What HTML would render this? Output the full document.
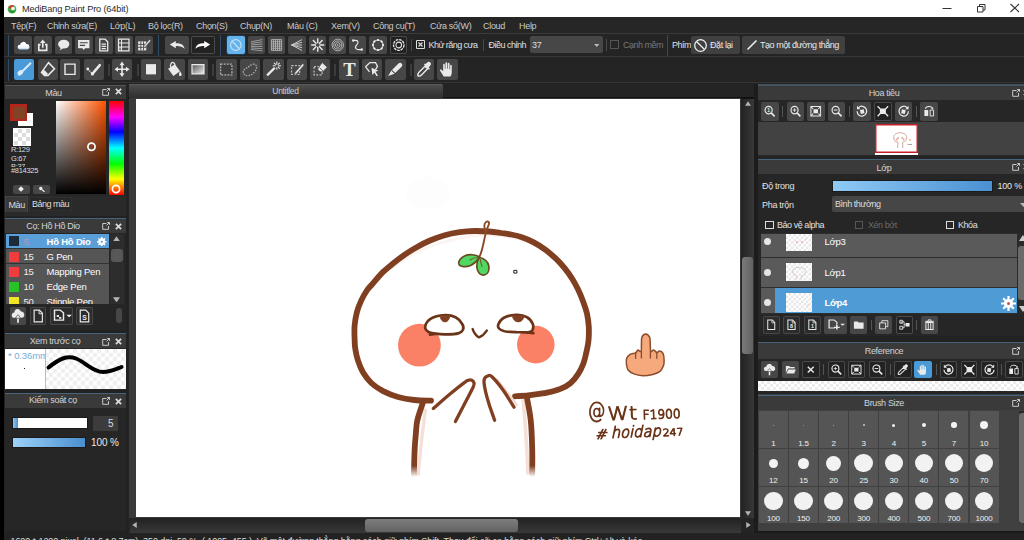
<!DOCTYPE html>
<html><head><meta charset="utf-8"><title>MediBang Paint Pro</title>
<style>
*{box-sizing:border-box;margin:0;padding:0}
html,body{width:1024px;height:540px;overflow:hidden;background:#222}
body{position:relative;font-family:"Liberation Sans","DejaVu Sans",sans-serif;font-size:9px;color:#d8d8d8}
.a{position:absolute}
.b{position:absolute;background:#474747;border-radius:2px}
.b.on{background:#4a9ad8}
.b.on2{background:#66b2ea;box-shadow:0 0 0 1px #1d3a55}
.b.dk{background:#222;box-shadow:inset 0 0 0 1px #4a4a4a}
.b.dk2{background:#2c2c2c;box-shadow:inset 0 0 0 1px #474747}
.b svg{position:absolute;left:0;top:0;width:100%;height:100%}
.sep{position:absolute;width:1px}
.chk{background-color:#fff;background-image:linear-gradient(45deg,#ddd 25%,transparent 25%,transparent 75%,#ddd 75%),linear-gradient(45deg,#ddd 25%,transparent 25%,transparent 75%,#ddd 75%);background-size:6px 6px;background-position:0 0,3px 3px}
</style></head><body>
<div class="a" style="left:0px;top:0px;width:4px;height:540px;background:#000;"></div>
<div class="a" style="left:4px;top:0px;width:1020px;height:17px;background:#fff;"></div>
<svg class="a" style="left:7px;top:4px" width="10" height="10" viewBox="0 0 10 10"><circle cx="5" cy="5.200" r="4.300" fill="#3fae49"/><path d="M5 1a4.300 4.300 0 0 0-3.800 2.500l3 1.500 3-3A4 4 0 0 0 5 1z" fill="#e23b2e"/><circle cx="6" cy="4.500" r="1.800" fill="#fff"/><path d="M3 6.500a3 3 0 0 0 4.500 1" stroke="#1d6e2a" stroke-width="1" fill="none"/></svg>
<div class="a" style="left:22px;top:4.5px;font-size:9.2px;color:#2a2a2a;letter-spacing:-0.15px;white-space:nowrap;line-height:1;">MediBang Paint Pro (64bit)</div>
<svg class="a" style="left:930px;top:0" width="94" height="17" viewBox="0 0 94 17"><path d="M12.500 8.500h9" stroke="#333" stroke-width="1"/><path d="M47.500 6.500h5.500v5.500h-5.500z" fill="none" stroke="#333"/><path d="M49.500 6.500v-2h5.500v5.500h-2" fill="none" stroke="#333"/><path d="M80.500 4l8.500 8M89 4l-8.500 8" stroke="#333" stroke-width="1.100"/></svg>
<div class="a" style="left:4px;top:17px;width:1020px;height:16px;background:#262626;"></div>
<div class="a" style="left:11px;top:21.8px;font-size:9px;color:#cacaca;letter-spacing:-0.3px;white-space:nowrap;line-height:1;">Tệp(F)</div>
<div class="a" style="left:47px;top:21.8px;font-size:9px;color:#cacaca;letter-spacing:-0.3px;white-space:nowrap;line-height:1;">Chỉnh sửa(E)</div>
<div class="a" style="left:110px;top:21.8px;font-size:9px;color:#cacaca;letter-spacing:-0.3px;white-space:nowrap;line-height:1;">Lớp(L)</div>
<div class="a" style="left:148px;top:21.8px;font-size:9px;color:#cacaca;letter-spacing:-0.3px;white-space:nowrap;line-height:1;">Bộ lọc(R)</div>
<div class="a" style="left:196px;top:21.8px;font-size:9px;color:#cacaca;letter-spacing:-0.3px;white-space:nowrap;line-height:1;">Chọn(S)</div>
<div class="a" style="left:240px;top:21.8px;font-size:9px;color:#cacaca;letter-spacing:-0.3px;white-space:nowrap;line-height:1;">Chụp(N)</div>
<div class="a" style="left:287px;top:21.8px;font-size:9px;color:#cacaca;letter-spacing:-0.3px;white-space:nowrap;line-height:1;">Màu (C)</div>
<div class="a" style="left:331px;top:21.8px;font-size:9px;color:#cacaca;letter-spacing:-0.3px;white-space:nowrap;line-height:1;">Xem(V)</div>
<div class="a" style="left:373px;top:21.8px;font-size:9px;color:#cacaca;letter-spacing:-0.3px;white-space:nowrap;line-height:1;">Công cụ(T)</div>
<div class="a" style="left:430px;top:21.8px;font-size:9px;color:#cacaca;letter-spacing:-0.3px;white-space:nowrap;line-height:1;">Cửa sổ(W)</div>
<div class="a" style="left:483px;top:21.8px;font-size:9px;color:#cacaca;letter-spacing:-0.3px;white-space:nowrap;line-height:1;">Cloud</div>
<div class="a" style="left:519px;top:21.8px;font-size:9px;color:#cacaca;letter-spacing:-0.3px;white-space:nowrap;line-height:1;">Help</div>
<div class="a" style="left:4px;top:33px;width:1020px;height:23px;background:#242424;border-top:1px solid #3a3a3a"></div>
<div class="a" style="left:4px;top:56px;width:1020px;height:28px;background:#242424;border-top:1.500px solid #383838"></div>
<div class="a" style="left:4px;top:82px;width:1020px;height:1px;background:#343434;"></div>
<div class="sep" style="left:8px;top:35px;height:21px;width:1px;background:#2f4c6a"></div>
<div class="sep" style="left:8px;top:59px;height:22px;width:1px;background:#2f4c6a"></div>
<div class="b " style="left:13.5px;top:36px;width:18px;height:18px"><svg viewBox="0 0 20 20" preserveAspectRatio="none"><defs><linearGradient id="cg" x1="0" y1="0" x2="0" y2="1"><stop offset="0" stop-color="#fff"/><stop offset=".7" stop-color="#f4f9ff"/><stop offset="1" stop-color="#a9cdee"/></linearGradient></defs><path d="M6.500 15a2.600 2.600 0 0 1 .2-5.200A3.600 3.600 0 0 1 13.700 9 2.900 2.900 0 0 1 14.500 15z" fill="url(#cg)"/></svg></div>
<div class="b " style="left:34px;top:36px;width:17.5px;height:18px"><svg viewBox="0 0 20 20" preserveAspectRatio="none"><path d="M7.500 9.500H5.500v6.500h9V9.500h-2" fill="none" stroke="#eaeaea" stroke-width="1.900"/><path d="M10 13V6" stroke="#eaeaea" stroke-width="1.900"/><path d="M6.800 7.800 10 3.800l3.200 4z" fill="#eaeaea"/></svg></div>
<div class="b " style="left:54.5px;top:36px;width:17.5px;height:18px"><svg viewBox="0 0 20 20" preserveAspectRatio="none"><ellipse cx="10" cy="9" rx="6.5" ry="4.8" fill="#eaeaea"/><path d="M7 12l-1.500 4 4.500-3z" fill="#eaeaea"/></svg></div>
<div class="b " style="left:75px;top:36px;width:17.5px;height:18px"><svg viewBox="0 0 20 20" preserveAspectRatio="none"><path d="M3.500 4.500h13v9h-5l-1.500 2-1.500-2h-5z" fill="#eaeaea"/><path d="M5.500 7.500h9M5.500 10.500h6" stroke="#444" stroke-width="1.300"/></svg></div>
<div class="b " style="left:95px;top:36px;width:17.5px;height:18px"><svg viewBox="0 0 20 20" preserveAspectRatio="none"><path d="M5.500 3.500h6l3 3v10h-9z" fill="none" stroke="#eaeaea" stroke-width="1.500"/><path d="M7.500 9h5M7.500 11.500h5M7.500 14h5" stroke="#eaeaea" stroke-width="1.200"/></svg></div>
<div class="b " style="left:115px;top:36px;width:17.5px;height:18px"><svg viewBox="0 0 20 20" preserveAspectRatio="none"><path d="M4 3.500h12v13H4z" fill="none" stroke="#eaeaea" stroke-width="1.400"/><path d="M4 7.800h12M4 12.200h12M7.500 3.500v13" stroke="#eaeaea" stroke-width="1.200"/><circle cx="5.800" cy="14.500" r="1.600" fill="#444" stroke="#eaeaea"/></svg></div>
<div class="b " style="left:135px;top:36px;width:18px;height:18px"><svg viewBox="0 0 20 20" preserveAspectRatio="none"><path d="M3.500 6h9v10h-9z" fill="#eaeaea"/><path d="M3.500 9.300h9M3.500 12.600h9M6.500 6v10M9.500 6v10" stroke="#444" stroke-width="1"/><path d="M10 11l6-7 1.500 1.200-6 7-2 .8z" fill="#eaeaea" stroke="#444" stroke-width=".6"/></svg></div>
<div class="sep" style="left:158px;top:35px;height:21px;width:1px;background:#2f4c6a"></div>
<div class="b " style="left:165px;top:36px;width:24px;height:18px"><svg viewBox="0 0 20 20" preserveAspectRatio="none"><path d="M4 9.500 9 5.500v2.500c4.500 0 7 1.800 7.300 6.500-1.300-2.500-3.300-3.500-7.300-3.500v2.500z" fill="#eaeaea"/></svg></div>
<div class="b dk" style="left:191px;top:36px;width:24px;height:18px"><svg viewBox="0 0 20 20" preserveAspectRatio="none"><path d="M16 9.500 11 5.500v2.500c-4.500 0-7 1.800-7.300 6.500 1.300-2.500 3.300-3.500 7.300-3.500v2.500z" fill="#fff"/></svg></div>
<div class="sep" style="left:220px;top:35px;height:21px;width:1px;background:#2f4c6a"></div>
<div class="b on2" style="left:227px;top:36px;width:17.5px;height:18px"><svg viewBox="0 0 20 20" preserveAspectRatio="none"><circle cx="10" cy="10" r="6" fill="none" stroke="#bfe1f8" stroke-width="1.300"/><path d="M5.800 5.800l8.400 8.400" stroke="#bfe1f8" stroke-width="1.300"/></svg></div>
<div class="b " style="left:247.5px;top:36px;width:17.5px;height:18px"><svg viewBox="0 0 20 20" preserveAspectRatio="none"><path d="M3.500 6.500l13-2.500M3.500 8.200l13-1.700M3.500 9.900l13-.9M3.500 11.600l13-.1M3.500 13.300l13 .7M3.500 15l13 1.500" stroke="#b4b4b4" stroke-width=".9"/></svg></div>
<div class="b " style="left:268px;top:36px;width:17px;height:18px"><svg viewBox="0 0 20 20" preserveAspectRatio="none"><path d="M4 4h12v12H4z" fill="none" stroke="#bbb"/><path d="M6.400 4v12M8.800 4v12M11.200 4v12M13.600 4v12M4 6.400h12M4 8.800h12M4 11.200h12M4 13.600h12" stroke="#bbb" stroke-width=".9"/></svg></div>
<div class="b " style="left:288px;top:36px;width:17.5px;height:18px"><svg viewBox="0 0 20 20" preserveAspectRatio="none"><path d="M4 10 16 4M4 10l12-3M4 10h12M4 10l12 3M4 10l12 6" stroke="#ccc" stroke-width="1.100"/></svg></div>
<div class="b " style="left:308.5px;top:36px;width:17.5px;height:18px"><svg viewBox="0 0 20 20" preserveAspectRatio="none"><path d="M10 2.500v5.500M10 12v5.500M2.500 10h5.500M12 10h5.500M4.500 4.500l4 4M11.500 11.500l4 4M15.500 4.500l-4 4M8.500 11.500l-4 4" stroke="#eaeaea" stroke-width="1.600"/></svg></div>
<div class="b " style="left:328.5px;top:36px;width:17.5px;height:18px"><svg viewBox="0 0 20 20" preserveAspectRatio="none"><circle cx="10" cy="10" r="6.500" fill="none" stroke="#ccc" stroke-width=".9"/><circle cx="10" cy="10" r="4.500" fill="none" stroke="#ccc" stroke-width=".9"/><circle cx="10" cy="10" r="2.600" fill="none" stroke="#ccc" stroke-width=".9"/><circle cx="10" cy="10" r=".9" fill="#ccc"/></svg></div>
<div class="b " style="left:349px;top:36px;width:17px;height:18px"><svg viewBox="0 0 20 20" preserveAspectRatio="none"><path d="M5 5c6-1 7 2 4 5s-1 6 6 5" fill="none" stroke="#eaeaea" stroke-width="1.300"/><circle cx="5" cy="5" r="1.400" fill="#eaeaea"/><circle cx="15" cy="15" r="1.400" fill="#eaeaea"/></svg></div>
<div class="b " style="left:369px;top:36px;width:18px;height:18px"><svg viewBox="0 0 20 20" preserveAspectRatio="none"><circle cx="10" cy="10" r="5.600" fill="none" stroke="#ddd" stroke-width="1.200"/><g fill="#fff"><circle cx="10" cy="4.400" r="1.100"/><circle cx="10" cy="15.600" r="1.100"/><circle cx="4.400" cy="10" r="1.100"/><circle cx="15.600" cy="10" r="1.100"/><circle cx="6" cy="6" r="1.100"/><circle cx="14" cy="6" r="1.100"/><circle cx="6" cy="14" r="1.100"/><circle cx="14" cy="14" r="1.100"/></g></svg></div>
<div class="b dk" style="left:389.5px;top:36px;width:17.5px;height:18px"><svg viewBox="0 0 20 20" preserveAspectRatio="none"><circle cx="10" cy="10" r="6" fill="none" stroke="#eaeaea" stroke-width="1.500" stroke-dasharray="3 1"/><circle cx="10" cy="10" r="3.200" fill="none" stroke="#eaeaea" stroke-width="1.200"/></svg></div>
<div class="sep" style="left:411px;top:39px;height:12px;width:1px;background:#484848"></div>
<svg class="a" style="left:416px;top:40px" width="9" height="9" viewBox="0 0 9 9"><path d="M.5.500h8v8h-8z" fill="#222" stroke="#ddd"/><path d="M2.500 2.500l4 4M6.500 2.500l-4 4" stroke="#ddd" stroke-width="1.200"/></svg>
<div class="a" style="left:428.5px;top:41px;font-size:9px;color:#e0e0e0;letter-spacing:-0.55px;white-space:nowrap;line-height:1;">Khử răng cưa</div>
<div class="sep" style="left:483px;top:39px;height:12px;width:1px;background:#484848"></div>
<div class="a" style="left:488.5px;top:41px;font-size:9px;color:#e0e0e0;letter-spacing:-0.5px;white-space:nowrap;line-height:1;">Điều chỉnh</div>
<div class="a" style="left:530px;top:36px;width:73px;height:16.5px;background:#474747;border-radius:2px"></div>
<div class="a" style="left:532px;top:41px;font-size:9px;color:#ddd;letter-spacing:-0.3px;white-space:nowrap;line-height:1;">37</div>
<svg class="a" style="left:594px;top:43.500px" width="5.500" height="3" viewBox="0 0 7 4"><path d="M0 0h7L3.500 4z" fill="#bbb"/></svg>
<div class="sep" style="left:606px;top:39px;height:12px;width:1px;background:#484848"></div>
<div class="a" style="left:610px;top:40px;width:9px;height:9px;background:#262626;border:1px solid #555"></div>
<div class="a" style="left:623px;top:41px;font-size:9px;color:#777;letter-spacing:-0.5px;white-space:nowrap;line-height:1;">Cạnh mềm</div>
<div class="sep" style="left:667px;top:35px;height:21px;width:1px;background:#2f4c6a"></div>
<div class="a" style="left:672px;top:41px;font-size:9px;color:#e0e0e0;letter-spacing:-0.5px;white-space:nowrap;line-height:1;">Phím</div>
<div class="a" style="left:690.5px;top:36px;width:49px;height:17.5px;background:#404040;border-radius:2px"></div>
<svg class="a" style="left:693px;top:37.500px" width="15" height="15" viewBox="0 0 15 15"><circle cx="7.500" cy="7.500" r="5.800" fill="none" stroke="#eee" stroke-width="1.300"/><path d="M3.500 3.500l8 8" stroke="#eee" stroke-width="1.300"/></svg>
<div class="a" style="left:710px;top:41px;font-size:9px;color:#e8e8e8;letter-spacing:-0.4px;white-space:nowrap;line-height:1;">Đặt lại</div>
<div class="a" style="left:742px;top:36px;width:102.5px;height:17.5px;background:#404040;border-radius:2px"></div>
<svg class="a" style="left:746px;top:39px" width="12" height="12" viewBox="0 0 12 12"><path d="M1.500 10.500l9-9" stroke="#eee" stroke-width="1.600"/></svg>
<div class="a" style="left:760px;top:41px;font-size:9px;color:#e8e8e8;letter-spacing:-0.45px;white-space:nowrap;line-height:1;">Tạo một đường thẳng</div>
<div class="b on" style="left:13.75px;top:59px;width:20.25px;height:20.5px"><svg viewBox="0 0 20 20" preserveAspectRatio="none"><path d="M16.300 4.200 8.800 11.500" stroke="#dcedfa" stroke-width="1.900" stroke-linecap="round"/><ellipse cx="6.300" cy="13.300" rx="3" ry="2.200" transform="rotate(-35 6.300 13.300)" fill="#dcedfa"/><path d="M3.500 16c1-.3 1.500-1 1.800-2l2 1.200c-1 1-2.300 1.200-3.800.8z" fill="#dcedfa"/></svg></div>
<div class="b " style="left:37.5px;top:59px;width:20px;height:20.5px"><svg viewBox="0 0 20 20" preserveAspectRatio="none"><path d="M10.500 3.500 16.500 9.500 10 16H6.500L3.500 13z" fill="none" stroke="#eaeaea" stroke-width="1.500"/><path d="M6 10.500 10 14.500 8.500 16H6.500L3.500 13z" fill="#eaeaea"/></svg></div>
<div class="b " style="left:60px;top:59px;width:20px;height:20.5px"><svg viewBox="0 0 20 20" preserveAspectRatio="none"><path d="M5 5h10v10H5z" fill="none" stroke="#eaeaea" stroke-width="1.400"/></svg></div>
<div class="b " style="left:83.75px;top:59px;width:20px;height:20.5px"><svg viewBox="0 0 20 20" preserveAspectRatio="none"><path d="M3.800 9.800 8.400 14.500" fill="none" stroke="#eaeaea" stroke-width="1.300" stroke-dasharray="1.200 1"/><path d="M9 13.800 15.800 6" stroke="#eaeaea" stroke-width="2.500" stroke-linecap="round"/><circle cx="3.800" cy="9.800" r="1.400" fill="#eaeaea"/><circle cx="8.400" cy="14.600" r="1.600" fill="#eaeaea"/></svg></div>
<div class="sep" style="left:107.5px;top:63.5px;height:12.5px;width:2px;background:#3c3c3c"></div>
<div class="b " style="left:112px;top:59px;width:20px;height:20.5px"><svg viewBox="0 0 20 20" preserveAspectRatio="none"><path d="M10 2.500 12.500 6h-1.700v3.200H14V7.500L17.500 10 14 12.500v-1.700h-3.200V14h1.700L10 17.500 7.500 14h1.700v-3.200H6v1.700L2.500 10 6 7.500v1.700h3.200V6H7.500z" fill="#eaeaea"/></svg></div>
<div class="sep" style="left:136.5px;top:63.5px;height:12.5px;width:2px;background:#3c3c3c"></div>
<div class="b " style="left:141px;top:59px;width:20px;height:20.5px"><svg viewBox="0 0 20 20" preserveAspectRatio="none"><path d="M5 5h10v10H5z" fill="#eaeaea"/></svg></div>
<div class="b " style="left:164.25px;top:59px;width:20.75px;height:20.5px"><svg viewBox="0 0 20 20" preserveAspectRatio="none"><path d="M4 9.500 10.500 5l5 7-6.500 4.500z" fill="#eaeaea"/><path d="M6.500 8c-1-3 1-5 2.500-4.500S10.500 6 10.500 6" fill="none" stroke="#eaeaea" stroke-width="1.200"/><path d="M15.500 12c1 1.500 1.500 2.500 1.500 3.300a1.300 1.300 0 0 1-2.600 0c0-.8.400-1.800 1.100-3.300z" fill="#eaeaea"/></svg></div>
<div class="b " style="left:188px;top:59px;width:20px;height:20.5px"><svg viewBox="0 0 20 20" preserveAspectRatio="none"><defs><linearGradient id="gr1" x1="0" y1="0" x2="1" y2="1"><stop offset="0" stop-color="#555"/><stop offset="1" stop-color="#eee"/></linearGradient></defs><path d="M4 5.500h12v9H4z" fill="url(#gr1)" stroke="#eaeaea" stroke-width="1.200"/></svg></div>
<div class="sep" style="left:211.5px;top:63.5px;height:12.5px;width:2px;background:#3c3c3c"></div>
<div class="b " style="left:216.25px;top:59px;width:20.5px;height:20.5px"><svg viewBox="0 0 20 20" preserveAspectRatio="none"><path d="M4.500 5h11v10.500h-11z" fill="#3e3e3e" stroke="#b4b4b4" stroke-width="1.300" stroke-dasharray="1.800 1.200"/></svg></div>
<div class="b " style="left:240px;top:59px;width:20px;height:20.5px"><svg viewBox="0 0 20 20" preserveAspectRatio="none"><path d="M3.500 13.500c-.8-2 .8-3.800 3.500-4.800 2.200-.8 3.200-3.500 6.500-3.700 2.800-.1 4 2.500 2.500 5.500s-4.500 5.500-8 5.700c-2.500.1-4-1-4.500-2.700z" fill="none" stroke="#a8a8a8" stroke-width="1.300" stroke-dasharray="1.600 1.100"/></svg></div>
<div class="b " style="left:263px;top:59px;width:20.5px;height:20.5px"><svg viewBox="0 0 20 20" preserveAspectRatio="none"><path d="M4 16 11.500 8.500" stroke="#eaeaea" stroke-width="2.200"/><path d="M13.500 2.500v3M13.500 8v2.500M9.500 6.500h2.800M14.800 6.500h2.700M10.700 3.700l1.800 1.800M14.500 7.500l1.800 1.800M16.300 3.700l-1.800 1.800" stroke="#eaeaea" stroke-width="1"/></svg></div>
<div class="b " style="left:286.5px;top:59px;width:20.25px;height:20.5px"><svg viewBox="0 0 20 20" preserveAspectRatio="none"><path d="M4.500 6.500h8v8.500h-8z" fill="none" stroke="#bbb" stroke-width="1.200" stroke-dasharray="2 1.300"/><path d="M8 13l7.500-8.500 1.500 1.300L9.500 14.300l-2.200.8z" fill="#eaeaea" stroke="#444" stroke-width=".5"/></svg></div>
<div class="b " style="left:309.75px;top:59px;width:20.25px;height:20.5px"><svg viewBox="0 0 20 20" preserveAspectRatio="none"><path d="M4 7.500h8v8h-8z" fill="none" stroke="#bbb" stroke-width="1.200" stroke-dasharray="2 1.300"/><path d="M12 3.500 17 8l-4.500 4.500h-2.500L7.500 10z" fill="#eaeaea" stroke="#444" stroke-width=".6"/><path d="M9.500 8.500l3.500 3.500" stroke="#444" stroke-width=".8"/></svg></div>
<div class="sep" style="left:333.5px;top:63.5px;height:12.5px;width:2px;background:#3c3c3c"></div>
<div class="b " style="left:338.5px;top:59px;width:20.75px;height:20.5px"><svg viewBox="0 0 20 20" preserveAspectRatio="none"><text x="10" y="16.300" font-family="Liberation Serif,DejaVu Serif,serif" font-weight="bold" font-size="18" text-anchor="middle" fill="#eaeaea">T</text></svg></div>
<div class="b " style="left:361.75px;top:59px;width:20px;height:20.5px"><svg viewBox="0 0 20 20" preserveAspectRatio="none"><path d="M3.500 7.500 8 3.500h5.500l2 3.500-2 3.500" fill="none" stroke="#eaeaea" stroke-width="1.300"/><path d="M3.500 7.500l4 5" stroke="#eaeaea" stroke-width="1.300"/><path d="M9.500 8.500l7 3-3 1 2.500 3.500-1.300.9L12.300 13.500l-2 2z" fill="#eaeaea"/></svg></div>
<div class="b " style="left:385.25px;top:59px;width:20.75px;height:20.5px"><svg viewBox="0 0 20 20" preserveAspectRatio="none"><path d="M3 16.500 6 11.500 13 4.500c1-1 2.200-1 3 0s1 2 0 3L9 14.500z" fill="#eaeaea"/><path d="M6.500 11 9.500 14" stroke="#444" stroke-width="1"/></svg></div>
<div class="sep" style="left:409.5px;top:63.5px;height:12.5px;width:2px;background:#3c3c3c"></div>
<div class="b " style="left:414px;top:59px;width:20px;height:20.5px"><svg viewBox="0 0 20 20" preserveAspectRatio="none"><path d="M4 16.500c-.5-1.500 0-2.500 1-3.500L11 7l2.500 2.500-6 6c-1 1-2 1.500-3.500 1z" fill="none" stroke="#eaeaea" stroke-width="1.400"/><path d="M10 5.500l5 5 1-1-1.300-1.300 1.800-2.200c.8-1 .5-2-.2-2.700s-1.700-1-2.700-.2L11.400 4.900 10.900 4.500z" fill="#eaeaea"/></svg></div>
<div class="b " style="left:437.25px;top:59px;width:20.5px;height:20.5px"><svg viewBox="0 0 20 20" preserveAspectRatio="none"><path d="M6.500 17c-1-1.500-2.500-4-3.500-5.500-.6-1 .6-1.800 1.400-1L6 12V5.500c0-1.200 1.600-1.200 1.600 0V9.500h.6V4c0-1.200 1.700-1.200 1.700 0V9.500h.6V4.600c0-1.200 1.700-1.200 1.700 0V10h.6V6.500c0-1.200 1.600-1.200 1.600 0V13c0 1.800-.6 3-1.200 4z" fill="#eaeaea"/></svg></div>
<div class="a" style="left:4.5px;top:84px;width:121.5px;height:132px;background:#262626;"></div>
<div class="a" style="left:4.5px;top:85px;width:121.5px;height:13.5px;background:#3a3a3a;border-top:1px solid #555"></div>
<div class="a" style="left:53.5px;top:88.5px;width:0;font-size:9px;line-height:1;color:#d4d4d4;letter-spacing:-.35px;white-space:nowrap;display:flex;justify-content:center"><span>Màu</span></div>
<svg class="a" style="left:102px;top:87.5px" width="8" height="8" viewBox="0 0 8 8"><path d="M4.500 1.500H.700v5.800h5.800V4" fill="none" stroke="#c8c8c8" stroke-width="1"/><path d="M4.500 3.500 7.500.500M5.200.500h2.300v2.300" fill="none" stroke="#c8c8c8" stroke-width="1"/></svg>
<svg class="a" style="left:115px;top:88px" width="7" height="7" viewBox="0 0 8 8"><path d="M1 1l6 6M7 1 1 7" stroke="#dcdcdc" stroke-width="2"/></svg>
<div class="a" style="left:18px;top:112.5px;width:15px;height:13.25px;background:#fff;"></div>
<div class="a" style="left:10px;top:104px;width:17px;height:17px;background:#b3261a;"><div class="a" style="left:2.500px;top:2.500px;width:12px;height:12px;background:#814325"></div></div>
<div class="a" style="left:13px;top:128px;width:17.5px;height:17.5px;background:#fff;"><div class="a chk" style="left:1px;top:1px;right:1px;bottom:1px;background-size:8px 8px;background-position:0 0,4px 4px"></div></div>
<div class="a" style="left:11px;top:146px;font-size:7.5px;color:#ddd;letter-spacing:-0.3px;white-space:nowrap;line-height:1;">R:129</div>
<div class="a" style="left:11px;top:154.5px;font-size:7.5px;color:#ddd;letter-spacing:-0.3px;white-space:nowrap;line-height:1;">G:67</div>
<div class="a" style="left:11px;top:163px;height:3.500px;overflow:hidden;font-size:7.500px;line-height:1;color:#ddd;letter-spacing:-.3px">B:37</div>
<div class="a" style="left:11px;top:166.5px;font-size:7.5px;color:#ddd;letter-spacing:-0.3px;white-space:nowrap;line-height:1;">#814325</div>
<div class="a" style="left:56px;top:101px;width:50px;height:93px;background:#ff6a00;background:linear-gradient(to top,#000,rgba(0,0,0,0)),linear-gradient(to right,#fff,#ff5300)"></div>
<div class="a" style="left:109px;top:101px;width:15px;height:93.5px;background:#f00;background:linear-gradient(to bottom,#f00 0%,#f0f 17%,#00f 33%,#0ff 50%,#0f0 67%,#ff0 83%,#f00 100%)"></div>
<svg class="a" style="left:85px;top:140px" width="14" height="14" viewBox="0 0 14 14"><circle cx="6.500" cy="6.750" r="3.600" fill="none" stroke="#fff" stroke-width="1.700"/></svg>
<svg class="a" style="left:109px;top:182px" width="14" height="14" viewBox="0 0 14 14"><circle cx="7" cy="7" r="3.600" fill="none" stroke="#fff" stroke-width="1.700"/></svg>
<div class="a" style="left:12.5px;top:185px;width:17.3px;height:8.5px;background:#474747;border-radius:2px"><div class="a" style="left:6.500px;top:2px;width:4px;height:4px;background:#eee;transform:rotate(45deg)"></div></div>
<div class="a" style="left:32.5px;top:185px;width:17.5px;height:8.5px;background:#474747;border-radius:2px"><svg class="a" style="left:5.500px;top:1px" width="7" height="6" viewBox="0 0 7 6"><circle cx="2.800" cy="2.500" r="1.700" fill="#eee"/><path d="M4 3.700 6.500 5.800" stroke="#eee" stroke-width="1.200"/></svg></div>
<div class="a" style="left:4.5px;top:195.5px;width:121.5px;height:20.5px;background:#2a2a2a;"></div>
<div class="a" style="left:5px;top:196px;width:22.5px;height:15.5px;background:#393939;border:1px solid #444;border-bottom:none"></div>
<div class="a" style="left:8.5px;top:201px;font-size:9px;color:#ddd;letter-spacing:-0.4px;white-space:nowrap;line-height:1;">Màu</div>
<div class="a" style="left:29px;top:197px;width:43px;height:13.5px;background:#272727;border:1px solid #303030"></div>
<div class="a" style="left:32px;top:200px;font-size:9px;color:#ddd;letter-spacing:-0.5px;white-space:nowrap;line-height:1;">Bảng màu</div>
<div class="a" style="left:4.5px;top:218px;width:121.5px;height:112px;background:#262626;"></div>
<div class="a" style="left:4.5px;top:218px;width:121.5px;height:15px;background:#3a3a3a;border-top:1px solid #47647f"></div>
<div class="a" style="left:53px;top:221.5px;width:0;font-size:9px;line-height:1;color:#d4d4d4;letter-spacing:-.35px;white-space:nowrap;display:flex;justify-content:center"><span>Cọ: Hồ Hồ Dio</span></div>
<svg class="a" style="left:102px;top:222px" width="8" height="8" viewBox="0 0 8 8"><path d="M4.500 1.500H.700v5.800h5.800V4" fill="none" stroke="#c8c8c8" stroke-width="1"/><path d="M4.500 3.500 7.500.500M5.200.500h2.300v2.300" fill="none" stroke="#c8c8c8" stroke-width="1"/></svg>
<svg class="a" style="left:115px;top:222.5px" width="7" height="7" viewBox="0 0 8 8"><path d="M1 1l6 6M7 1 1 7" stroke="#dcdcdc" stroke-width="2"/></svg>
<div class="a" style="left:6px;top:234.25px;width:103px;height:69.75px;background:#333;overflow:hidden"><div class="a" style="left:0;top:0px;width:103px;height:14.200px;background:#5b9fd8"></div><div class="a" style="left:2.700px;top:2.2px;width:10px;height:10px;background:#1d2a3a"></div><div class="a" style="left:17.500px;top:3px;font-size:9.500px;line-height:1;color:#c78fb0;letter-spacing:-.2px">5</div><div class="a" style="left:40.500px;top:3px;font-size:9.500px;line-height:1;color:#fff;letter-spacing:-.2px;white-space:nowrap;font-weight:bold;">Hồ Hồ Dio</div><div class="a" style="left:0;top:15.05px;width:103px;height:14.200px;background:#555"></div><div class="a" style="left:2.700px;top:17.25px;width:10px;height:10px;background:#f03c3c"></div><div class="a" style="left:17.500px;top:18.05px;font-size:9.500px;line-height:1;color:#f0f0f0;letter-spacing:-.2px">15</div><div class="a" style="left:40.500px;top:18.05px;font-size:9.500px;line-height:1;color:#fff;letter-spacing:-.2px;white-space:nowrap;">G Pen</div><div class="a" style="left:0;top:30.1px;width:103px;height:14.200px;background:#555"></div><div class="a" style="left:2.700px;top:32.3px;width:10px;height:10px;background:#f03c3c"></div><div class="a" style="left:17.500px;top:33.1px;font-size:9.500px;line-height:1;color:#f0f0f0;letter-spacing:-.2px">15</div><div class="a" style="left:40.500px;top:33.1px;font-size:9.500px;line-height:1;color:#fff;letter-spacing:-.2px;white-space:nowrap;">Mapping Pen</div><div class="a" style="left:0;top:45.15px;width:103px;height:14.200px;background:#555"></div><div class="a" style="left:2.700px;top:47.35px;width:10px;height:10px;background:#28c228"></div><div class="a" style="left:17.500px;top:48.15px;font-size:9.500px;line-height:1;color:#f0f0f0;letter-spacing:-.2px">10</div><div class="a" style="left:40.500px;top:48.15px;font-size:9.500px;line-height:1;color:#fff;letter-spacing:-.2px;white-space:nowrap;">Edge Pen</div><div class="a" style="left:0;top:60.2px;width:103px;height:14.200px;background:#555"></div><div class="a" style="left:2.700px;top:62.4px;width:10px;height:10px;background:#f0e628"></div><div class="a" style="left:17.500px;top:63.2px;font-size:9.500px;line-height:1;color:#f0f0f0;letter-spacing:-.2px">50</div><div class="a" style="left:40.500px;top:63.2px;font-size:9.500px;line-height:1;color:#fff;letter-spacing:-.2px;white-space:nowrap;">Stipple Pen</div><svg class="a" style="left:91px;top:2.600px" width="9.500" height="9.500" viewBox="0 0 11 11"><circle cx="5.500" cy="5.500" r="3" fill="none" stroke="#fff" stroke-width="2"/><path d="M5.500 0v11M0 5.500h11M1.600 1.600l7.800 7.800M9.400 1.600 1.600 9.400" stroke="#fff" stroke-width="1.600"/><circle cx="5.500" cy="5.500" r="1.300" fill="#5b9fd8"/></svg></div>
<div class="a" style="left:110px;top:234px;width:14px;height:70px;background:#2d2d2d;"></div>
<svg class="a" style="left:113px;top:235.500px" width="7" height="5.500" viewBox="0 0 8 6"><path d="M4 0 8 6H0z" fill="#b4b4b4"/></svg>
<svg class="a" style="left:113px;top:296.500px" width="7" height="5.500" viewBox="0 0 8 6"><path d="M4 6 8 0H0z" fill="#b4b4b4"/></svg>
<div class="a" style="left:110.5px;top:249px;width:12.5px;height:12.5px;background:#585858;border-radius:3px"></div>
<div class="b " style="left:10px;top:306.5px;width:16px;height:18px"><svg viewBox="0 0 20 20" preserveAspectRatio="none"><path d="M5 12a3 3 0 0 1 .4-6 4.200 4.200 0 0 1 8.200-.9A3.400 3.400 0 0 1 15 12z" fill="#eaeaea"/><path d="M10 17.500v-6" stroke="#eaeaea" stroke-width="2.200"/><path d="M6.500 12.500 10 8.500l3.500 4z" fill="#eaeaea" stroke="#474747" stroke-width=".8"/></svg></div>
<div class="b dk2" style="left:29.5px;top:306.5px;width:16.5px;height:18px"><svg viewBox="0 0 20 20" preserveAspectRatio="none"><path d="M5 3.500h6.500l3.500 3.500v9.500h-10z" fill="none" stroke="#eaeaea" stroke-width="1.400"/><path d="M11 3.500v4h4" fill="none" stroke="#eaeaea" stroke-width="1.100"/></svg></div>
<div class="b dk2" style="left:50px;top:306.5px;width:22.5px;height:18px"><svg viewBox="0 0 20 20" preserveAspectRatio="none"><path d="M4 3.500h5l3 3v8H4z" fill="none" stroke="#eaeaea" stroke-width="1.300"/><path d="M6 9h2v2H6zM8 11h2v2H8z" fill="#eaeaea"/><path d="M14.500 8.500h5l-2.500 3z" fill="#eaeaea"/></svg></div>
<div class="b dk2" style="left:76px;top:306.5px;width:17px;height:18px"><svg viewBox="0 0 20 20" preserveAspectRatio="none"><path d="M5 3.500h6.500l3.500 3.500v9.500h-10z" fill="none" stroke="#eaeaea" stroke-width="1.400"/><text x="10" y="14.800" font-family="Liberation Sans,sans-serif" font-weight="bold" font-size="8" text-anchor="middle" fill="#eaeaea">S</text></svg></div>
<div class="a" style="left:115.5px;top:307.5px;width:6.5px;height:15px;background:#474747;border-radius:3px"></div>
<div class="a" style="left:4.5px;top:333px;width:121.5px;height:57px;background:#262626;"></div>
<div class="a" style="left:4.5px;top:333px;width:121.5px;height:15px;background:#3a3a3a;border-top:1px solid #47647f"></div>
<div class="a" style="left:55px;top:336.5px;width:0;font-size:9px;line-height:1;color:#d4d4d4;letter-spacing:-.35px;white-space:nowrap;display:flex;justify-content:center"><span>Xem trước cọ</span></div>
<svg class="a" style="left:102px;top:337.5px" width="8" height="8" viewBox="0 0 8 8"><path d="M4.500 1.500H.700v5.800h5.800V4" fill="none" stroke="#c8c8c8" stroke-width="1"/><path d="M4.500 3.500 7.500.500M5.200.500h2.300v2.300" fill="none" stroke="#c8c8c8" stroke-width="1"/></svg>
<svg class="a" style="left:115px;top:338px" width="7" height="7" viewBox="0 0 8 8"><path d="M1 1l6 6M7 1 1 7" stroke="#dcdcdc" stroke-width="2"/></svg>
<div class="a" style="left:5px;top:348.5px;width:120.75px;height:40.25px;background:#fff;"></div>
<div class="a" style="left:45px;top:348.5px;width:80.75px;height:40.25px;background:#fff;"><div class="a chk" style="left:0;top:0;right:0;bottom:0;background-size:8px 8px;background-position:0 0,4px 4px;opacity:.45"></div><svg class="a" style="left:0;top:0" width="81" height="40" viewBox="0 0 81 40"><path d="M3.500 18.500C14 10 22 6 31 9.500s17 13.500 27 13.500c7 0 12-2.500 18.500-5" fill="none" stroke="#000" stroke-width="4" stroke-linecap="round"/></svg></div>
<div class="a" style="left:44.5px;top:348.5px;width:0.5px;height:40.25px;background:#bbb;"></div>
<div class="a" style="left:8px;top:351px;width:36.500px;overflow:hidden;font-size:9.500px;line-height:1.100;color:#78aeda;white-space:nowrap;letter-spacing:-.1px">* 0.36mm</div>
<div class="a" style="left:24px;top:367.8px;width:1.4px;height:1.4px;background:#222;"></div>
<div class="a" style="left:4.5px;top:393px;width:121.5px;height:138px;background:#262626;"></div>
<div class="a" style="left:4.5px;top:392.5px;width:121.5px;height:15px;background:#3a3a3a;border-top:1px solid #47647f"></div>
<div class="a" style="left:53px;top:396px;width:0;font-size:9px;line-height:1;color:#d4d4d4;letter-spacing:-.35px;white-space:nowrap;display:flex;justify-content:center"><span>Kiểm soát cọ</span></div>
<svg class="a" style="left:102px;top:397px" width="8" height="8" viewBox="0 0 8 8"><path d="M4.500 1.500H.700v5.800h5.800V4" fill="none" stroke="#c8c8c8" stroke-width="1"/><path d="M4.500 3.500 7.500.500M5.200.500h2.300v2.300" fill="none" stroke="#c8c8c8" stroke-width="1"/></svg>
<svg class="a" style="left:115px;top:397.5px" width="7" height="7" viewBox="0 0 8 8"><path d="M1 1l6 6M7 1 1 7" stroke="#dcdcdc" stroke-width="2"/></svg>
<div class="a" style="left:11.5px;top:417px;width:76px;height:12px;background:#1a1a1a;"><div class="a" style="left:1px;top:1px;right:1px;bottom:1px;background:#fff"></div><div class="a" style="left:1px;top:1px;width:5px;bottom:1px;background:linear-gradient(to right,#8fc8f4,#4a8fd0)"></div></div>
<div class="a" style="left:93px;top:416px;width:25px;height:14.5px;background:#3c3c3c;border-radius:1px"></div>
<div class="a" style="left:108px;top:418.5px;font-size:10px;color:#ddd;letter-spacing:0px;white-space:nowrap;line-height:1;">5</div>
<div class="a" style="left:11.5px;top:436.5px;width:74.5px;height:11.5px;background:#1a1a1a;"><div class="a" style="left:1px;top:1px;right:1px;bottom:1px;background:linear-gradient(to right,#9dd2f8,#4a8fd0)"></div></div>
<div class="a" style="left:91px;top:437.5px;font-size:10px;color:#e8e8e8;letter-spacing:-0.1px;white-space:nowrap;line-height:1;">100 %</div>
<div class="a" style="left:128px;top:84px;width:628px;height:449px;background:#242424;"></div>
<div class="a" style="left:128px;top:97px;width:628px;height:1.7px;background:#111;"></div>
<div class="a" style="left:128.5px;top:83.5px;width:314.5px;height:14.5px;background:#444;background:linear-gradient(to bottom,#4e4e4e,#3a3a3a 60%,#303030);border-top:1px solid #5a5a5a;border-radius:0 2px 0 0"></div>
<div class="a" style="left:285.500px;top:87px;width:0;display:flex;justify-content:center;font-size:8.500px;line-height:1;color:#cfcfcf;letter-spacing:-.3px"><span>Untitled</span></div>
<div class="a" style="left:128.5px;top:98px;width:612.5px;height:420px;background:#3a3a3a;"></div>
<div class="a" style="left:136px;top:98.7px;width:604px;height:418.6px;background:#fff;"></div>
<div class="a" style="left:741px;top:98.5px;width:13px;height:419.5px;background:#2e2e2e;background:linear-gradient(to right,#222,#383838)"></div>
<svg class="a" style="left:744.500px;top:100.500px" width="6" height="5" viewBox="0 0 8 6"><path d="M4 0 8 6H0z" fill="#b4b4b4"/></svg>
<svg class="a" style="left:744.500px;top:511px" width="6" height="5" viewBox="0 0 8 6"><path d="M4 6 8 0H0z" fill="#b4b4b4"/></svg>
<div class="a" style="left:741.5px;top:256.5px;width:11.8px;height:97px;background:#6c6c6c;border-radius:3px;background:linear-gradient(to right,#7a7a7a,#626262)"></div>
<div class="a" style="left:130px;top:518px;width:611px;height:14.5px;background:#2e2e2e;background:linear-gradient(to bottom,#222,#383838)"></div>
<svg class="a" style="left:131.500px;top:522px" width="5" height="6" viewBox="0 0 6 8"><path d="M0 4 6 0V8z" fill="#b4b4b4"/></svg>
<svg class="a" style="left:745.500px;top:522px" width="5" height="6" viewBox="0 0 6 8"><path d="M6 4 0 0V8z" fill="#b4b4b4"/></svg>
<div class="a" style="left:365px;top:519px;width:152.5px;height:12.5px;background:#6c6c6c;border-radius:3px;background:linear-gradient(to bottom,#7e7e7e,#626262)"></div>
<div class="a" style="left:4px;top:533px;width:1020px;height:7px;background:#222;"></div>
<div class="a" style="left:10.5px;top:537px;font-size:9px;color:#ddd;letter-spacing:-0.08px;white-space:nowrap;line-height:1;">1600 * 1200 pixel&nbsp; (11.6 * 8.7cm)&nbsp; 350 dpi&nbsp; 50 %&nbsp; ( 1095, 455 )&nbsp; Vẽ một đường thẳng bằng cách giữ phím Shift, Thay đổi cỡ cọ bằng cách giữ phím Ctrl+Alt và kéo</div>
<svg class="a" style="left:136px;top:99px;filter:blur(.35px)" width="604" height="418" viewBox="136 99 604 418">
<defs><linearGradient id="hd" gradientUnits="userSpaceOnUse" x1="512" y1="0" x2="522" y2="0"><stop offset="0" stop-color="#813f22" stop-opacity="0"/><stop offset="1" stop-color="#813f22"/></linearGradient><linearGradient id="fd" gradientUnits="userSpaceOnUse" x1="0" y1="396" x2="0" y2="477"><stop offset="0" stop-color="#813f22"/><stop offset=".86" stop-color="#813f22"/><stop offset="1" stop-color="#813f22" stop-opacity="0"/></linearGradient></defs>
<g fill="none" stroke-linecap="round" stroke-linejoin="round">
<path d="M425.300 410C422.300 432 419.800 455 418.200 474" stroke="#f5e0d8" stroke-width="3.400"/>
<path d="M523.300 400C525.300 425 527.300 450 527.800 473" stroke="#f5e0d8" stroke-width="3.600"/>
<path d="M392 268C414 250 450 236.500 486 235 520 235 548 247 566 267" stroke="#fdf3ef" stroke-width="2.500"/>
<ellipse cx="428" cy="193" rx="22" ry="16" fill="#fefdfd" stroke="none"/>
<circle cx="419.400" cy="345.200" r="21.400" fill="#fa8166" stroke="none"/>
<circle cx="535.800" cy="344.600" r="18.800" fill="#fa8166" stroke="none"/>
<path d="M431.0 400.7C428.2 400.6 419.8 400.6 414.3 400.0C408.8 399.4 403.2 398.5 398.0 397.0C392.8 395.5 387.6 393.4 383.1 391.1C378.7 388.8 374.6 386.1 371.3 383.0C368.0 379.9 365.3 376.3 363.1 372.6C360.9 368.9 359.3 364.6 358.0 360.7C356.7 356.8 355.9 352.6 355.3 349.0C354.7 345.4 354.7 342.8 354.6 338.9C354.5 335.0 354.2 330.1 354.6 325.6C355.0 321.2 355.8 316.4 356.9 312.2C358.0 308.0 359.6 304.1 361.3 300.4C363.0 296.7 365.4 292.7 367.2 290.0C369.0 287.3 369.6 287.2 372.2 284.3C374.8 281.4 379.1 275.9 382.6 272.4C386.1 268.9 389.3 266.5 393.0 263.5C396.7 260.5 400.9 257.3 404.8 254.6C408.8 251.9 412.5 249.5 416.7 247.2C420.9 244.8 425.3 242.5 430.0 240.5C434.7 238.5 439.9 236.6 444.8 235.2C449.7 233.8 454.7 232.9 459.6 232.2C464.5 231.5 469.4 231.1 474.4 231.0C479.3 230.9 484.9 231.2 489.3 231.5C493.7 231.8 497.6 232.5 501.0 233.0C504.4 233.5 506.5 233.6 510.0 234.3C513.5 235.0 517.9 235.8 521.9 237.2C525.9 238.5 529.8 240.3 533.7 242.4C537.7 244.5 541.9 247.1 545.6 249.8C549.3 252.5 552.7 255.6 555.9 258.7C559.1 261.8 562.1 265.0 564.8 268.3C567.5 271.6 570.0 275.2 572.2 278.7C574.4 282.2 576.2 285.6 578.1 289.5C580.0 293.4 581.8 297.9 583.3 301.9C584.8 305.9 586.1 309.5 587.0 313.7C587.9 317.9 588.5 322.6 588.8 327.0C589.0 331.4 588.9 336.1 588.5 340.4C588.1 344.6 587.2 348.6 586.3 352.5C585.4 356.4 584.7 360.1 583.3 363.7C581.9 367.3 580.2 370.9 578.1 374.1C576.0 377.3 573.7 380.5 570.7 383.0C567.8 385.5 564.4 387.3 560.4 388.9C556.4 390.5 551.7 391.6 547.0 392.6C542.3 393.6 536.6 394.2 532.2 394.8C527.8 395.4 523.3 395.8 520.4 396.0C517.5 396.2 515.9 396.2 515.0 396.3" stroke="#813f22" stroke-width="5.800"/>
<path d="M422.6 403.5C421.7 406.2 418.5 415.2 417.4 420.0C416.3 424.8 416.4 427.2 416.0 432.0C415.6 436.8 415.1 441.4 414.7 448.7C414.3 456.0 414.0 471.4 413.9 476.0" stroke="url(#fd)" stroke-width="5.800"/>
<path d="M527.0 398.0C527.6 401.7 529.8 411.6 530.7 420.0C531.6 428.4 532.0 439.7 532.2 448.7C532.5 457.7 532.2 469.8 532.2 474.0" stroke="url(#fd)" stroke-width="5.800"/>
<path d="M471 389C467 399 461 410 456.500 418" stroke="#f6d3c8" stroke-width="2"/>
<path d="M497 379.500C504 388 511 397 517 405" stroke="#f6d3c8" stroke-width="2"/>
<path d="M433.3 408.5C436.1 406.1 444.8 398.3 450.0 394.0C455.2 389.7 461.3 384.9 464.4 382.6C467.5 380.3 467.3 380.7 468.5 380.3C469.7 379.9 470.9 379.8 471.8 380.2C472.7 380.6 473.6 381.4 473.8 382.5C474.1 383.6 474.8 383.4 473.3 386.8C471.8 390.2 468.0 397.2 465.0 403.0C462.0 408.8 457.0 418.4 455.4 421.5" stroke="#813f22" stroke-width="3.300"/>
<path d="M494.6 420.2C493.7 417.5 490.5 408.8 489.0 404.0C487.5 399.2 486.4 395.4 485.6 391.7C484.8 388.0 484.1 384.3 484.0 382.0C483.9 379.7 484.3 378.8 485.0 377.8C485.7 376.8 486.8 376.0 488.0 375.8C489.2 375.6 489.5 374.4 492.0 376.8C494.5 379.2 499.3 384.9 503.0 390.0C506.7 395.1 512.2 404.3 514.0 407.2" stroke="#813f22" stroke-width="3.300"/>
<path d="M428.3 331.9C426.6 330.7 424.7 328.8 425.2 326.6C425.6 324.4 427.7 320.6 430.9 318.7C434.0 316.8 440.1 315.4 444.2 315.2C448.3 314.9 452.6 315.8 455.6 317.3C458.6 318.8 461.0 322.0 462.2 324.0C463.5 326.1 463.7 328.2 463.0 329.8C462.3 331.3 460.9 332.7 458.2 333.4C455.5 334.2 450.5 334.3 446.7 334.3C442.9 334.4 438.4 334.1 435.3 333.7C432.2 333.3 430.0 333.1 428.3 331.9z" stroke="#6b3418" stroke-width="2.700" fill="#fff"/>
<path d="M430.0 334.6L435.3 333.9" stroke="#6b3418" stroke-width="2.800"/>
<path d="M439.9 316.2C441.0 324.0 449.0 324.0 450.0 315.9z" fill="#813f22" stroke="#813f22" stroke-width=".6"/>
<path d="M499.0 328.5C498.0 327.3 497.7 325.8 498.5 324.0C499.3 322.2 500.9 319.2 503.9 317.7C506.9 316.2 512.7 314.9 516.6 314.8C520.4 314.7 524.3 315.6 527.0 317.2C529.7 318.7 531.9 321.9 532.8 324.0C533.7 326.1 533.1 328.4 532.6 329.8C532.0 331.1 531.9 331.8 529.3 332.2C526.6 332.6 520.7 332.3 516.6 332.2C512.4 332.0 507.4 331.8 504.5 331.2C501.6 330.5 500.0 329.7 499.0 328.5z" stroke="#6b3418" stroke-width="2.700" fill="#fff"/>
<path d="M526.7 332.4L533.3 333.1" stroke="#6b3418" stroke-width="2.800"/>
<path d="M512.2 315.7C513.4 324.0 522.9 324.0 524.2 316.2z" fill="#813f22" stroke="#813f22" stroke-width=".6"/>
<path d="M472.600 329C474 333 476.500 336 479 337.400 482.500 336 485 333.500 486.900 330.400" stroke="#6b3418" stroke-width="2.300"/>
<path d="M479.500 256.500C481.500 253 483 246 484.200 240 485 236 485.800 233 486.300 230.500 488 226 490 223.500 488.800 222 487 220.500 484.300 222.500 484.300 226 484.400 228 485 230 485.500 231" stroke="#8a4a2a" stroke-width="1.900"/>
<path d="M479.500 257C476 254.500 469 253.800 464.500 256 460.500 258 458 261.500 458.800 264 460 267 466 267.500 470.500 265.500 474.500 263.500 477.500 260.500 479.500 257z" fill="#4fd862" stroke="#6a4a22" stroke-width="1.700"/>
<path d="M479.500 257.500C477 261 476.300 266 477.500 270 478.800 273.500 481.500 275.500 484.500 275 488 274 489.500 270 488.800 266 488 262 484.500 258.500 479.500 257.500z" fill="#4fd862" stroke="#6a4a22" stroke-width="1.700"/>
<path d="M478 257.500C475 257.500 472 258.500 470 260M480.500 259.500C480.500 262 481 264.500 482 266.500" stroke="#7a5a2a" stroke-width="1.100"/>
<rect x="514.200" y="270.400" width="2.700" height="2.700" stroke="#222" stroke-width="1" fill="#fff"/>
<path d="M626.7 358.3C626.1 359.9 626.2 361.9 626.4 363.9C626.7 365.8 626.9 368.3 628.1 370.0C629.4 371.7 631.4 372.9 633.9 373.9C636.3 374.8 639.6 375.6 642.8 375.7C645.9 375.8 649.9 375.1 652.8 374.4C655.6 373.7 658.2 372.8 660.0 371.4C661.8 370.1 662.6 367.9 663.3 366.1C664.0 364.3 664.2 362.7 664.1 360.6C664.1 358.4 663.8 354.9 663.0 353.3C662.2 351.7 660.4 351.1 659.4 351.0C658.4 350.9 658.0 352.7 657.0 352.6C656.0 352.4 654.7 350.3 653.7 350.1C652.6 349.9 651.3 352.3 650.8 351.4C650.2 350.6 650.5 347.3 650.3 345.0C650.1 342.7 650.4 339.3 649.7 337.4C648.9 335.6 647.0 333.9 645.7 333.9C644.4 333.9 642.6 335.4 641.9 337.2C641.2 339.1 641.6 342.6 641.4 345.0C641.3 347.4 641.7 350.6 641.1 351.4C640.5 352.3 638.8 349.9 637.9 350.1C637.0 350.3 637.0 352.1 635.7 352.8C634.4 353.5 631.5 353.4 630.0 354.3C628.5 355.3 627.3 356.7 626.7 358.3z" fill="#f6a97c" stroke="#8a4c2c" stroke-width="1.500"/>
<path d="M635.6 352.8L635.6 358.3M641.4 351.4L641.4 357.9M650.4 351.4L650.4 357.9M656.8 352.6L656.8 358.3" stroke="#8a4c2c" stroke-width="1.300"/>
</g>
<g font-family="'DejaVu Sans Light','DejaVu Sans',sans-serif" font-weight="200" fill="#6b3418" stroke="#6b3418" stroke-width=".85" stroke-linejoin="round">
<text x="587.500" y="417.600" font-size="22" textLength="18" lengthAdjust="spacingAndGlyphs">@</text>
<text x="607.500" y="420.300" font-size="18.500" textLength="30" lengthAdjust="spacingAndGlyphs" transform="rotate(-2 608 420)">Wt</text>
<text x="642.700" y="419.300" stroke-width="1.050" font-size="12.500" textLength="38" lengthAdjust="spacingAndGlyphs" transform="rotate(-2 643 419)">F1900</text>
<text x="595" y="438.600" stroke-width="1" font-size="13.500" textLength="11.500" lengthAdjust="spacingAndGlyphs" font-style="italic">#</text>
<text x="611" y="438" stroke-width="1.050" font-size="15.500" textLength="50" lengthAdjust="spacingAndGlyphs" font-style="italic" transform="rotate(-2 611 438)">hoidap</text>
<text x="663" y="436.300" stroke-width="1" font-size="10" textLength="20.500" lengthAdjust="spacingAndGlyphs" transform="rotate(-3 663 436)">247</text>
</g>
</svg>

<div class="a" style="left:754px;top:84px;width:3.5px;height:449px;background:#1c1c1c;"></div>
<div class="a" style="left:757.5px;top:84px;width:266.5px;height:73px;background:#262626;"></div>
<div class="a" style="left:757.5px;top:84px;width:272.5px;height:16px;background:#3a3a3a;border-top:2px solid #46525e"></div>
<div class="a" style="left:884px;top:88.7px;width:0;font-size:9px;line-height:1;color:#d4d4d4;letter-spacing:-.35px;white-space:nowrap;display:flex;justify-content:center"><span>Hoa tiêu</span></div>
<svg class="a" style="left:1011.5px;top:88.5px" width="8" height="8" viewBox="0 0 8 8"><path d="M4.500 1.500H.700v5.800h5.800V4" fill="none" stroke="#c8c8c8" stroke-width="1"/><path d="M4.500 3.500 7.500.500M5.200.500h2.300v2.300" fill="none" stroke="#c8c8c8" stroke-width="1"/></svg>
<svg class="a" style="left:1022.5px;top:89px" width="7" height="7" viewBox="0 0 8 8"><path d="M1 1l6 6M7 1 1 7" stroke="#dcdcdc" stroke-width="2"/></svg>
<div class="b " style="left:761.25px;top:102px;width:17.5px;height:18.5px"><svg style="transform:scale(0.85)" viewBox="0 0 20 20" preserveAspectRatio="none"><circle cx="8.500" cy="8.500" r="4.800" fill="none" stroke="#eaeaea" stroke-width="1.600"/><path d="M12 12l4.500 4.500" stroke="#eaeaea" stroke-width="2.200"/><text x="8.500" y="11" font-family="Liberation Sans,sans-serif" font-weight="bold" font-size="6.800" text-anchor="middle" fill="#eaeaea">1</text></svg></div>
<div class="sep" style="left:782px;top:106px;height:11px;width:1px;background:#555"></div>
<div class="b " style="left:786.75px;top:102px;width:17.25px;height:18.5px"><svg style="transform:scale(0.85)" viewBox="0 0 20 20" preserveAspectRatio="none"><circle cx="8.500" cy="8.500" r="4.800" fill="none" stroke="#eaeaea" stroke-width="1.600"/><path d="M12 12l4.500 4.500" stroke="#eaeaea" stroke-width="2.200"/><path d="M6.200 8.500h4.600M8.500 6.200v4.600" stroke="#eaeaea" stroke-width="1.100"/></svg></div>
<div class="b " style="left:807px;top:102px;width:17.5px;height:18.5px"><svg style="transform:scale(0.85)" viewBox="0 0 20 20" preserveAspectRatio="none"><path d="M3.500 4h13v12h-13z" fill="none" stroke="#eaeaea" stroke-width="1.300"/><path d="M7 7.500h6v5H7z" fill="#eaeaea"/><path d="M3.500 4l3 3M16.500 4l-3 3M3.500 16l3-3M16.500 16l-3-3" stroke="#eaeaea" stroke-width="1.300"/></svg></div>
<div class="b " style="left:827.5px;top:102px;width:17.5px;height:18.5px"><svg style="transform:scale(0.85)" viewBox="0 0 20 20" preserveAspectRatio="none"><circle cx="8.500" cy="8.500" r="4.800" fill="none" stroke="#eaeaea" stroke-width="1.600"/><path d="M12 12l4.500 4.500" stroke="#eaeaea" stroke-width="2.200"/><path d="M6 8.500h5" stroke="#eaeaea" stroke-width="1.300"/></svg></div>
<div class="sep" style="left:848.75px;top:106px;height:11px;width:1px;background:#555"></div>
<div class="b " style="left:853px;top:102px;width:17.75px;height:18.5px"><svg style="transform:scale(0.85)" viewBox="0 0 20 20" preserveAspectRatio="none"><path d="M5.500 5.500A6.300 6.300 0 1 1 3.700 10" fill="none" stroke="#eaeaea" stroke-width="1.600"/><path d="M3.500 3v4.500H8z" fill="#eaeaea"/><path d="M7.500 8.500l5-1 1 5-5 1z" fill="#eaeaea"/></svg></div>
<div class="b dk" style="left:873.75px;top:102px;width:17.75px;height:18.5px"><svg style="transform:scale(0.85)" viewBox="0 0 20 20" preserveAspectRatio="none"><path d="M6 6.500h8v7H6z" fill="#eaeaea"/><path d="M3 3.500l3.500 3.500M17 3.500l-3.500 3.500M3 16.500l3.500-3.500M17 16.500l-3.500-3.500" stroke="#eaeaea" stroke-width="1.800"/></svg></div>
<div class="b " style="left:894.5px;top:102px;width:17.5px;height:18.5px"><svg style="transform:scale(0.85)" viewBox="0 0 20 20" preserveAspectRatio="none"><path d="M14.500 5.500A6.300 6.300 0 1 0 16.300 10" fill="none" stroke="#eaeaea" stroke-width="1.600"/><path d="M16.500 3v4.500H12z" fill="#eaeaea"/><path d="M12.500 8.500l-5-1-1 5 5 1z" fill="#eaeaea"/></svg></div>
<div class="sep" style="left:915.5px;top:106px;height:11px;width:1px;background:#555"></div>
<div class="b " style="left:920px;top:102px;width:18px;height:18.5px"><svg style="transform:scale(0.85)" viewBox="0 0 20 20" preserveAspectRatio="none"><path d="M4 8.500h5v7.500H4z" fill="#eaeaea"/><path d="M11.500 8.500h4.500v7.500h-4.500z" fill="none" stroke="#eaeaea" stroke-width="1.200"/><path d="M5.500 7c0-4 9-4 9 0" fill="none" stroke="#eaeaea" stroke-width="1.300"/><path d="M13 6l1.500 2 1.500-2.500z" fill="#eaeaea"/></svg></div>
<div class="a" style="left:757.5px;top:121.5px;width:266.5px;height:33.5px;background:#424242;"></div>
<div class="a" style="left:875px;top:152px;width:43px;height:3px;background:#fff;"></div>
<svg class="a" style="left:875px;top:123.500px" width="43" height="29" viewBox="0 0 43 29"><rect x=".75" y=".75" width="41.500" height="27.500" fill="#fff" stroke="#c8202a" stroke-width="1.500"/><g fill="none" stroke="#c9917c" stroke-width=".8"><path d="M23 18.300c-2.800-.3-4.300-2-4.300-4.800 0-2.800 2.600-4.700 6.500-4.700s6.500 1.900 6.500 4.700c0 2.600-1.500 4.300-4 4.700"/><path d="M23 18.500l-.5 5.500M27.500 18.300l.4 5.700"/><path d="M22.500 14h1.600M26.500 14h1.600" stroke="#8a4a30"/></g><circle cx="21.800" cy="15.500" r="1.100" fill="#f9a08c"/><circle cx="28.600" cy="15.500" r="1" fill="#f9a08c"/><circle cx="35" cy="16" r=".9" fill="#f5a97a"/><path d="M32.500 20.500h4.500" stroke="#a87a68" stroke-width=".7"/></svg>
<div class="a" style="left:757.5px;top:158px;width:266.5px;height:178px;background:#262626;"></div>
<div class="a" style="left:757.5px;top:159px;width:272.5px;height:15px;background:#3a3a3a;border-top:1px solid #47647f"></div>
<div class="a" style="left:884px;top:163.7px;width:0;font-size:9px;line-height:1;color:#d4d4d4;letter-spacing:-.35px;white-space:nowrap;display:flex;justify-content:center"><span>Lớp</span></div>
<svg class="a" style="left:1011.5px;top:162.5px" width="8" height="8" viewBox="0 0 8 8"><path d="M4.500 1.500H.700v5.800h5.800V4" fill="none" stroke="#c8c8c8" stroke-width="1"/><path d="M4.500 3.500 7.500.500M5.200.500h2.300v2.300" fill="none" stroke="#c8c8c8" stroke-width="1"/></svg>
<svg class="a" style="left:1022.5px;top:163px" width="7" height="7" viewBox="0 0 8 8"><path d="M1 1l6 6M7 1 1 7" stroke="#dcdcdc" stroke-width="2"/></svg>
<div class="a" style="left:762px;top:181.5px;font-size:9px;color:#e0e0e0;letter-spacing:-0.3px;white-space:nowrap;line-height:1;">Độ trong</div>
<div class="a" style="left:832px;top:179.5px;width:160.5px;height:12px;background:#1a1a1a;"><div class="a" style="left:1px;top:1px;right:1px;bottom:1px;background:linear-gradient(to right,#8fcaf6,#4a90d2)"></div></div>
<div class="a" style="left:997.5px;top:181.5px;font-size:9px;color:#e8e8e8;letter-spacing:-0.2px;white-space:nowrap;line-height:1;">100 %</div>
<div class="a" style="left:762px;top:200.5px;font-size:9px;color:#e0e0e0;letter-spacing:-0.3px;white-space:nowrap;line-height:1;">Pha trộn</div>
<div class="a" style="left:832px;top:196px;width:198px;height:16px;background:#464646;border-radius:2px"></div>
<div class="a" style="left:835px;top:200.3px;font-size:9px;color:#ddd;letter-spacing:-0.45px;white-space:nowrap;line-height:1;">Bình thường</div>
<svg class="a" style="left:1020px;top:203px" width="7" height="4" viewBox="0 0 7 4"><path d="M0 0h7L3.500 4z" fill="#bbb"/></svg>
<div class="a" style="left:765px;top:220.5px;width:8.5px;height:8.5px;background:#262626;border:1px solid #ddd"></div>
<div class="a" style="left:777px;top:221px;font-size:9px;color:#e0e0e0;letter-spacing:-0.45px;white-space:nowrap;line-height:1;">Bảo vệ alpha</div>
<div class="a" style="left:854.5px;top:220.5px;width:8.5px;height:8.5px;background:#262626;border:1px solid #555"></div>
<div class="a" style="left:868px;top:221px;font-size:9px;color:#6a6a6a;letter-spacing:-0.45px;white-space:nowrap;line-height:1;">Xén bớt</div>
<div class="a" style="left:945.5px;top:220.5px;width:8.5px;height:8.5px;background:#262626;border:1px solid #ddd"></div>
<div class="a" style="left:958px;top:221px;font-size:9px;color:#e0e0e0;letter-spacing:-0.45px;white-space:nowrap;line-height:1;">Khóa</div>
<div class="a" style="left:760.75px;top:233px;width:256px;height:81px;background:#2e2e2e;"></div>
<div class="a" style="left:760.75px;top:233.75px;width:256px;height:23.25px;background:#5a5a5a;"></div>
<div class="a" style="left:764px;top:238px;width:7px;height:7px;border-radius:50%;background:#e6e6e6"></div>
<div class="a" style="left:785.75px;top:234px;width:26.25px;height:17px;background:#fff;overflow:hidden"><div class="a chk" style="left:0;top:0;right:0;bottom:0;background-size:5px 5px;background-position:0 0,2.500px 2.500px;opacity:.75"></div><svg class="a" style="left:0;top:0" width="26" height="17" viewBox="0 0 26 17"><circle cx="11" cy="8" r=".8" fill="#f08a78"/><circle cx="16" cy="8" r=".8" fill="#f08a78"/><circle cx="20" cy="5" r=".6" fill="#f08a78"/></svg></div>
<div class="a" style="left:824.5px;top:237px;font-size:9.5px;color:#fff;letter-spacing:-0.3px;white-space:nowrap;line-height:1;">Lớp3</div>
<div class="a" style="left:760.75px;top:258px;width:256px;height:28.75px;background:#5a5a5a;"></div>
<div class="a" style="left:764px;top:268.875px;width:7px;height:7px;border-radius:50%;background:#e6e6e6"></div>
<div class="a" style="left:785.75px;top:262.5px;width:26.25px;height:18.5px;background:#fff;overflow:hidden"><div class="a chk" style="left:0;top:0;right:0;bottom:0;background-size:5px 5px;background-position:0 0,2.500px 2.500px;opacity:.75"></div><svg class="a" style="left:0;top:0" width="26" height="19" viewBox="0 0 26 19"><path d="M11 13c-3-.5-4.500-2-4.500-4.500S9 4.500 13 4.500s6.500 1.500 6.500 4S18 12.500 15 13M11 13l-.5 3.500M15 13l.5 3.500" fill="none" stroke="#c9b4ac" stroke-width=".6"/></svg></div>
<div class="a" style="left:824.5px;top:267.875px;font-size:9.5px;color:#fff;letter-spacing:-0.3px;white-space:nowrap;line-height:1;">Lớp1</div>
<div class="a" style="left:760.75px;top:288px;width:256px;height:25px;background:#5a5a5a;"></div>
<div class="a" style="left:774.5px;top:288px;width:242.25px;height:25px;background:#4f9bd6;"></div>
<div class="a" style="left:764px;top:298.5px;width:7px;height:7px;border-radius:50%;background:#e6e6e6"></div>
<div class="a" style="left:785.75px;top:292.5px;width:26.25px;height:19.5px;background:#fff;overflow:hidden"><div class="a chk" style="left:0;top:0;right:0;bottom:0;background-size:5px 5px;background-position:0 0,2.500px 2.500px;opacity:.75"></div><svg class="a" style="left:0;top:0" width="26" height="20" viewBox="0 0 26 20"><circle cx="22" cy="12" r=".7" fill="#f5a97a"/></svg></div>
<div class="a" style="left:824.5px;top:297.5px;font-size:9.5px;color:#fff;letter-spacing:-0.3px;white-space:nowrap;line-height:1;font-weight:bold;">Lớp4</div>
<svg class="a" style="left:1000.500px;top:296px" width="15" height="15" viewBox="0 0 15 15"><path d="M7.500 0v15M0 7.500h15M2.200 2.200l10.600 10.600M12.800 2.200 2.200 12.800" stroke="#fff" stroke-width="2.200"/><circle cx="7.500" cy="7.500" r="4.600" fill="#fff"/><circle cx="7.500" cy="7.500" r="1.500" fill="#c05050"/></svg>
<div class="a" style="left:1017px;top:233px;width:7px;height:81px;background:#2a2a2a;"></div>
<div class="a" style="left:1017.5px;top:246px;width:6.5px;height:54px;background:#6a6a6a;border-radius:3px 0 0 3px"></div>
<svg class="a" style="left:1018.500px;top:235px" width="8" height="6" viewBox="0 0 8 6"><path d="M4 0 8 6H0z" fill="#ccc"/></svg>
<svg class="a" style="left:1018.500px;top:306px" width="8" height="6" viewBox="0 0 8 6"><path d="M4 6 8 0H0z" fill="#ccc"/></svg>
<div class="b dk2" style="left:763px;top:316px;width:16.5px;height:17.5px"><svg style="transform:scale(0.85)" viewBox="0 0 20 20" preserveAspectRatio="none"><path d="M5 3.500h6.500l3.500 3.500v9.500h-10z" fill="none" stroke="#eaeaea" stroke-width="1.400"/><path d="M11 3.500v4h4" fill="none" stroke="#eaeaea" stroke-width="1.100"/></svg></div>
<div class="b dk2" style="left:783px;top:316px;width:17px;height:17.5px"><svg style="transform:scale(0.85)" viewBox="0 0 20 20" preserveAspectRatio="none"><path d="M5 3.500h6.500l3.500 3.500v9.500h-10z" fill="none" stroke="#eaeaea" stroke-width="1.400"/><path d="M11 3.500v4h4" fill="none" stroke="#eaeaea" stroke-width="1.100"/><text x="10" y="14.800" font-family="Liberation Sans,sans-serif" font-weight="bold" font-size="7.500" text-anchor="middle" fill="#eaeaea">8</text></svg></div>
<div class="b dk2" style="left:803.75px;top:316px;width:16.75px;height:17.5px"><svg style="transform:scale(0.85)" viewBox="0 0 20 20" preserveAspectRatio="none"><path d="M5 3.500h6.500l3.500 3.500v9.500h-10z" fill="none" stroke="#eaeaea" stroke-width="1.400"/><path d="M11 3.500v4h4" fill="none" stroke="#eaeaea" stroke-width="1.100"/><text x="10" y="14.800" font-family="Liberation Sans,sans-serif" font-weight="bold" font-size="7.500" text-anchor="middle" fill="#eaeaea">1</text></svg></div>
<div class="b " style="left:823.75px;top:316px;width:22.75px;height:17.5px"><svg style="transform:scale(0.85)" viewBox="0 0 20 20" preserveAspectRatio="none"><path d="M9.500 14.500H3.500V3.500h5l3 3v3.500" fill="none" stroke="#eaeaea" stroke-width="1.300"/><path d="M8.500 13.500h6M11.500 10.500v6" stroke="#eaeaea" stroke-width="1.700"/><path d="M15 8.500h5l-2.500 3z" fill="#eaeaea"/></svg></div>
<div class="b " style="left:849.5px;top:316px;width:17.5px;height:17.5px"><svg style="transform:scale(0.85)" viewBox="0 0 20 20" preserveAspectRatio="none"><path d="M3.500 5.500h5l1.500 1.500h6.500v8.500h-13z" fill="#eaeaea"/></svg></div>
<div class="sep" style="left:870.75px;top:320px;height:10px;width:1px;background:#555"></div>
<div class="b " style="left:874.5px;top:316px;width:17.5px;height:17.5px"><svg style="transform:scale(0.85)" viewBox="0 0 20 20" preserveAspectRatio="none"><path d="M7.500 4.500h8v8h-8z" fill="none" stroke="#eaeaea" stroke-width="1.200"/><path d="M4.500 7.500h8v8h-8z" fill="#474747" stroke="#eaeaea" stroke-width="1.200"/></svg></div>
<div class="b dk" style="left:895.5px;top:316px;width:17px;height:17.5px"><svg style="transform:scale(0.85)" viewBox="0 0 20 20" preserveAspectRatio="none"><path d="M3.500 4h4v4h-4zM3.500 12h4v4h-4z" fill="none" stroke="#eaeaea" stroke-width="1.200"/><path d="M11.500 7.500h5.500v5h-5.500z" fill="#eaeaea"/><path d="M7.500 6h2v8h-2M9.500 10h2" fill="none" stroke="#eaeaea" stroke-width="1.100"/><path d="M4.500 5.500h2v1.500h-2z" fill="#eaeaea"/></svg></div>
<div class="sep" style="left:916px;top:320px;height:10px;width:1px;background:#555"></div>
<div class="b " style="left:921px;top:316px;width:17px;height:17.5px"><svg style="transform:scale(0.85)" viewBox="0 0 20 20" preserveAspectRatio="none"><path d="M5 7h10v9.500H5z" fill="none" stroke="#eaeaea" stroke-width="1.400"/><path d="M4 5.500h12M8 5.500v-2h4v2M8.300 7v9.500M11.700 7v9.500" fill="none" stroke="#eaeaea" stroke-width="1.300"/></svg></div>
<div class="a" style="left:757.5px;top:342px;width:266.5px;height:51px;background:#262626;"></div>
<div class="a" style="left:757.5px;top:342px;width:272.5px;height:16.5px;background:#3a3a3a;border-top:1px solid #47647f"></div>
<div class="a" style="left:884px;top:346.7px;width:0;font-size:9px;line-height:1;color:#d4d4d4;letter-spacing:-.35px;white-space:nowrap;display:flex;justify-content:center"><span>Reference</span></div>
<svg class="a" style="left:1011.5px;top:347px" width="8" height="8" viewBox="0 0 8 8"><path d="M4.500 1.500H.700v5.800h5.800V4" fill="none" stroke="#c8c8c8" stroke-width="1"/><path d="M4.500 3.500 7.500.500M5.200.500h2.300v2.300" fill="none" stroke="#c8c8c8" stroke-width="1"/></svg>
<div class="b " style="left:761.25px;top:360.5px;width:17px;height:17.3px"><svg style="transform:scale(0.85)" viewBox="0 0 20 20" preserveAspectRatio="none"><path d="M5 12a3 3 0 0 1 .4-6 4.200 4.200 0 0 1 8.200-.9A3.400 3.400 0 0 1 15 12z" fill="#eaeaea"/><path d="M10 17.500v-6" stroke="#eaeaea" stroke-width="2.200"/><path d="M6.500 12.500 10 8.500l3.500 4z" fill="#eaeaea" stroke="#474747" stroke-width=".8"/></svg></div>
<div class="b " style="left:781.5px;top:360.5px;width:17.25px;height:17.3px"><svg style="transform:scale(0.85)" viewBox="0 0 20 20" preserveAspectRatio="none"><path d="M3.500 5h4.500l1.500 1.500h6v2h-9l-3 6z" fill="#eaeaea"/><path d="M6.500 9.500h11l-2.500 6h-11z" fill="#eaeaea" stroke="#474747" stroke-width=".6"/></svg></div>
<div class="b dk" style="left:802px;top:360.5px;width:17.5px;height:17.3px"><svg style="transform:scale(0.85)" viewBox="0 0 20 20" preserveAspectRatio="none"><path d="M6 6l8 8M14 6l-8 8" stroke="#eaeaea" stroke-width="1.900"/></svg></div>
<div class="sep" style="left:823px;top:364px;height:11px;width:1px;background:#555"></div>
<div class="b dk" style="left:827.5px;top:360.5px;width:17px;height:17.3px"><svg style="transform:scale(0.85)" viewBox="0 0 20 20" preserveAspectRatio="none"><circle cx="8.500" cy="8.500" r="4.800" fill="none" stroke="#eaeaea" stroke-width="1.600"/><path d="M12 12l4.500 4.500" stroke="#eaeaea" stroke-width="2.200"/><path d="M6.200 8.500h4.600M8.500 6.200v4.600" stroke="#eaeaea" stroke-width="1.100"/></svg></div>
<div class="b dk" style="left:848.25px;top:360.5px;width:16.75px;height:17.3px"><svg style="transform:scale(0.85)" viewBox="0 0 20 20" preserveAspectRatio="none"><path d="M3.500 4h13v12h-13z" fill="none" stroke="#eaeaea" stroke-width="1.300"/><path d="M7 7.500h6v5H7z" fill="#eaeaea"/><path d="M3.500 4l3 3M16.500 4l-3 3M3.500 16l3-3M16.500 16l-3-3" stroke="#eaeaea" stroke-width="1.300"/></svg></div>
<div class="b dk" style="left:868.75px;top:360.5px;width:17px;height:17.3px"><svg style="transform:scale(0.85)" viewBox="0 0 20 20" preserveAspectRatio="none"><circle cx="8.500" cy="8.500" r="4.800" fill="none" stroke="#eaeaea" stroke-width="1.600"/><path d="M12 12l4.500 4.500" stroke="#eaeaea" stroke-width="2.200"/><path d="M6 8.500h5" stroke="#eaeaea" stroke-width="1.300"/></svg></div>
<div class="sep" style="left:889.5px;top:364px;height:11px;width:1px;background:#555"></div>
<div class="b dk" style="left:894.25px;top:360.5px;width:17.5px;height:17.3px"><svg style="transform:scale(0.85)" viewBox="0 0 20 20" preserveAspectRatio="none"><path d="M4 16.500c-.5-1.500 0-2.500 1-3.500L11 7l2.500 2.500-6 6c-1 1-2 1.500-3.500 1z" fill="none" stroke="#eaeaea" stroke-width="1.400"/><path d="M10 5.500l5 5 1-1-1.300-1.300 1.800-2.200c.8-1 .5-2-.2-2.700s-1.700-1-2.700-.2L11.400 4.900 10.900 4.500z" fill="#eaeaea"/></svg></div>
<div class="b on" style="left:914.25px;top:360.5px;width:17.5px;height:17.3px"><svg style="transform:scale(0.85)" viewBox="0 0 20 20" preserveAspectRatio="none"><path d="M6.500 17c-1-1.500-2.500-4-3.500-5.500-.6-1 .6-1.800 1.400-1L6 12V5.500c0-1.200 1.600-1.200 1.600 0V9.500h.6V4c0-1.200 1.700-1.200 1.700 0V9.500h.6V4.600c0-1.200 1.700-1.200 1.700 0V10h.6V6.500c0-1.200 1.600-1.200 1.600 0V13c0 1.800-.6 3-1.200 4z" fill="#eaeaea"/></svg></div>
<div class="sep" style="left:935.5px;top:364px;height:11px;width:1px;background:#555"></div>
<div class="b dk" style="left:939.75px;top:360.5px;width:17px;height:17.3px"><svg style="transform:scale(0.85)" viewBox="0 0 20 20" preserveAspectRatio="none"><path d="M5.500 5.500A6.300 6.300 0 1 1 3.700 10" fill="none" stroke="#eaeaea" stroke-width="1.600"/><path d="M3.500 3v4.500H8z" fill="#eaeaea"/><path d="M7.500 8.500l5-1 1 5-5 1z" fill="#eaeaea"/></svg></div>
<div class="b dk" style="left:960.5px;top:360.5px;width:16.75px;height:17.3px"><svg style="transform:scale(0.85)" viewBox="0 0 20 20" preserveAspectRatio="none"><path d="M6 6.500h8v7H6z" fill="#eaeaea"/><path d="M3 3.500l3.500 3.500M17 3.500l-3.500 3.500M3 16.500l3.500-3.500M17 16.500l-3.500-3.500" stroke="#eaeaea" stroke-width="1.800"/></svg></div>
<div class="b dk" style="left:980.5px;top:360.5px;width:17px;height:17.3px"><svg style="transform:scale(0.85)" viewBox="0 0 20 20" preserveAspectRatio="none"><path d="M14.500 5.500A6.300 6.300 0 1 0 16.300 10" fill="none" stroke="#eaeaea" stroke-width="1.600"/><path d="M16.500 3v4.500H12z" fill="#eaeaea"/><path d="M12.500 8.500l-5-1-1 5 5 1z" fill="#eaeaea"/></svg></div>
<div class="sep" style="left:1001px;top:364px;height:11px;width:1px;background:#555"></div>
<div class="b dk" style="left:1005px;top:360.5px;width:17.5px;height:17.3px"><svg style="transform:scale(0.85)" viewBox="0 0 20 20" preserveAspectRatio="none"><path d="M4 8.500h5v7.500H4z" fill="#eaeaea"/><path d="M11.500 8.500h4.500v7.500h-4.500z" fill="none" stroke="#eaeaea" stroke-width="1.200"/><path d="M5.500 7c0-4 9-4 9 0" fill="none" stroke="#eaeaea" stroke-width="1.300"/><path d="M13 6l1.500 2 1.500-2.500z" fill="#eaeaea"/></svg></div>
<div class="a" style="left:758.25px;top:380.75px;width:265.75px;height:10.5px;background:#fff;"><div class="a chk" style="left:0;top:0;right:0;bottom:0;background-size:6px 6px;background-position:0 0,3px 3px;opacity:.55"></div></div>
<div class="a" style="left:757.5px;top:394px;width:266.5px;height:137.5px;background:#404040;"></div>
<div class="a" style="left:757.5px;top:394.5px;width:272.5px;height:15.5px;background:#3a3a3a;border-top:1px solid #47647f"></div>
<div class="a" style="left:884px;top:399.2px;width:0;font-size:9px;line-height:1;color:#d4d4d4;letter-spacing:-.35px;white-space:nowrap;display:flex;justify-content:center"><span>Brush Size</span></div>
<svg class="a" style="left:1011.5px;top:399px" width="8" height="8" viewBox="0 0 8 8"><path d="M4.500 1.500H.700v5.800h5.800V4" fill="none" stroke="#c8c8c8" stroke-width="1"/><path d="M4.500 3.500 7.500.500M5.200.500h2.300v2.300" fill="none" stroke="#c8c8c8" stroke-width="1"/></svg>
<div class="a" style="left:758.8px;top:411px;width:29.1px;height:36.9px;background:#555;"></div>
<div class="a" style="left:773.05px;top:424.9px;width:0.6px;height:0.6px;border-radius:50%;background:#f2f2f2;opacity:0.47"></div>
<div class="a" style="left:773.35px;top:439.5px;width:0;display:flex;justify-content:center;font-size:8px;line-height:1;color:#f0f0f0;letter-spacing:-.2px"><span>1</span></div>
<div class="a" style="left:788.9px;top:411px;width:29.1px;height:36.9px;background:#555;"></div>
<div class="a" style="left:803px;top:424.75px;width:0.9px;height:0.9px;border-radius:50%;background:#f2f2f2;opacity:0.53"></div>
<div class="a" style="left:803.45px;top:439.5px;width:0;display:flex;justify-content:center;font-size:8px;line-height:1;color:#f0f0f0;letter-spacing:-.2px"><span>1.5</span></div>
<div class="a" style="left:819px;top:411px;width:29.1px;height:36.9px;background:#555;"></div>
<div class="a" style="left:832.9px;top:424.55px;width:1.3px;height:1.3px;border-radius:50%;background:#f2f2f2;opacity:0.61"></div>
<div class="a" style="left:833.55px;top:439.5px;width:0;display:flex;justify-content:center;font-size:8px;line-height:1;color:#f0f0f0;letter-spacing:-.2px"><span>2</span></div>
<div class="a" style="left:849.1px;top:411px;width:29.1px;height:36.9px;background:#555;"></div>
<div class="a" style="left:862.65px;top:424.2px;width:2px;height:2px;border-radius:50%;background:#f2f2f2;opacity:0.75"></div>
<div class="a" style="left:863.65px;top:439.5px;width:0;display:flex;justify-content:center;font-size:8px;line-height:1;color:#f0f0f0;letter-spacing:-.2px"><span>3</span></div>
<div class="a" style="left:879.2px;top:411px;width:29.1px;height:36.9px;background:#555;"></div>
<div class="a" style="left:892.15px;top:423.6px;width:3.2px;height:3.2px;border-radius:50%;background:#f2f2f2;opacity:1"></div>
<div class="a" style="left:893.75px;top:439.5px;width:0;display:flex;justify-content:center;font-size:8px;line-height:1;color:#f0f0f0;letter-spacing:-.2px"><span>4</span></div>
<div class="a" style="left:909.3px;top:411px;width:29.1px;height:36.9px;background:#555;"></div>
<div class="a" style="left:921.95px;top:423.3px;width:3.8px;height:3.8px;border-radius:50%;background:#f2f2f2;opacity:1"></div>
<div class="a" style="left:923.85px;top:439.5px;width:0;display:flex;justify-content:center;font-size:8px;line-height:1;color:#f0f0f0;letter-spacing:-.2px"><span>5</span></div>
<div class="a" style="left:939.4px;top:411px;width:29.1px;height:36.9px;background:#555;"></div>
<div class="a" style="left:951.2px;top:422.45px;width:5.5px;height:5.5px;border-radius:50%;background:#f2f2f2;opacity:1"></div>
<div class="a" style="left:953.95px;top:439.5px;width:0;display:flex;justify-content:center;font-size:8px;line-height:1;color:#f0f0f0;letter-spacing:-.2px"><span>7</span></div>
<div class="a" style="left:969.5px;top:411px;width:29.1px;height:36.9px;background:#555;"></div>
<div class="a" style="left:980.05px;top:421.2px;width:8px;height:8px;border-radius:50%;background:#f2f2f2;opacity:1"></div>
<div class="a" style="left:984.05px;top:439.5px;width:0;display:flex;justify-content:center;font-size:8px;line-height:1;color:#f0f0f0;letter-spacing:-.2px"><span>10</span></div>
<div class="a" style="left:758.8px;top:448.9px;width:29.1px;height:36.9px;background:#555;"></div>
<div class="a" style="left:768.6px;top:458.55px;width:9.5px;height:9.5px;border-radius:50%;background:#f2f2f2;opacity:1"></div>
<div class="a" style="left:773.35px;top:477.3px;width:0;display:flex;justify-content:center;font-size:8px;line-height:1;color:#f0f0f0;letter-spacing:-.2px"><span>12</span></div>
<div class="a" style="left:788.9px;top:448.9px;width:29.1px;height:36.9px;background:#555;"></div>
<div class="a" style="left:797.7px;top:457.55px;width:11.5px;height:11.5px;border-radius:50%;background:#f2f2f2;opacity:1"></div>
<div class="a" style="left:803.45px;top:477.3px;width:0;display:flex;justify-content:center;font-size:8px;line-height:1;color:#f0f0f0;letter-spacing:-.2px"><span>15</span></div>
<div class="a" style="left:819px;top:448.9px;width:29.1px;height:36.9px;background:#555;"></div>
<div class="a" style="left:825.8px;top:455.55px;width:15.5px;height:15.5px;border-radius:50%;background:#f2f2f2;opacity:1"></div>
<div class="a" style="left:833.55px;top:477.3px;width:0;display:flex;justify-content:center;font-size:8px;line-height:1;color:#f0f0f0;letter-spacing:-.2px"><span>20</span></div>
<div class="a" style="left:849.1px;top:448.9px;width:29.1px;height:36.9px;background:#555;"></div>
<div class="a" style="left:854.45px;top:454.1px;width:18.4px;height:18.4px;border-radius:50%;background:#f2f2f2;opacity:1"></div>
<div class="a" style="left:863.65px;top:477.3px;width:0;display:flex;justify-content:center;font-size:8px;line-height:1;color:#f0f0f0;letter-spacing:-.2px"><span>25</span></div>
<div class="a" style="left:879.2px;top:448.9px;width:29.1px;height:36.9px;background:#555;"></div>
<div class="a" style="left:884.55px;top:454.1px;width:18.4px;height:18.4px;border-radius:50%;background:#f2f2f2;opacity:1"></div>
<div class="a" style="left:893.75px;top:477.3px;width:0;display:flex;justify-content:center;font-size:8px;line-height:1;color:#f0f0f0;letter-spacing:-.2px"><span>30</span></div>
<div class="a" style="left:909.3px;top:448.9px;width:29.1px;height:36.9px;background:#555;"></div>
<div class="a" style="left:914.65px;top:454.1px;width:18.4px;height:18.4px;border-radius:50%;background:#f2f2f2;opacity:1"></div>
<div class="a" style="left:923.85px;top:477.3px;width:0;display:flex;justify-content:center;font-size:8px;line-height:1;color:#f0f0f0;letter-spacing:-.2px"><span>40</span></div>
<div class="a" style="left:939.4px;top:448.9px;width:29.1px;height:36.9px;background:#555;"></div>
<div class="a" style="left:944.75px;top:454.1px;width:18.4px;height:18.4px;border-radius:50%;background:#f2f2f2;opacity:1"></div>
<div class="a" style="left:953.95px;top:477.3px;width:0;display:flex;justify-content:center;font-size:8px;line-height:1;color:#f0f0f0;letter-spacing:-.2px"><span>50</span></div>
<div class="a" style="left:969.5px;top:448.9px;width:29.1px;height:36.9px;background:#555;"></div>
<div class="a" style="left:974.85px;top:454.1px;width:18.4px;height:18.4px;border-radius:50%;background:#f2f2f2;opacity:1"></div>
<div class="a" style="left:984.05px;top:477.3px;width:0;display:flex;justify-content:center;font-size:8px;line-height:1;color:#f0f0f0;letter-spacing:-.2px"><span>70</span></div>
<div class="a" style="left:758.8px;top:486.8px;width:29.1px;height:36.2px;background:#555;"></div>
<div class="a" style="left:764.15px;top:491.8px;width:18.4px;height:18.4px;border-radius:50%;background:#f2f2f2;opacity:1"></div>
<div class="a" style="left:773.35px;top:515px;width:0;display:flex;justify-content:center;font-size:8px;line-height:1;color:#f0f0f0;letter-spacing:-.2px"><span>100</span></div>
<div class="a" style="left:788.9px;top:486.8px;width:29.1px;height:36.2px;background:#555;"></div>
<div class="a" style="left:794.25px;top:491.8px;width:18.4px;height:18.4px;border-radius:50%;background:#f2f2f2;opacity:1"></div>
<div class="a" style="left:803.45px;top:515px;width:0;display:flex;justify-content:center;font-size:8px;line-height:1;color:#f0f0f0;letter-spacing:-.2px"><span>150</span></div>
<div class="a" style="left:819px;top:486.8px;width:29.1px;height:36.2px;background:#555;"></div>
<div class="a" style="left:824.35px;top:491.8px;width:18.4px;height:18.4px;border-radius:50%;background:#f2f2f2;opacity:1"></div>
<div class="a" style="left:833.55px;top:515px;width:0;display:flex;justify-content:center;font-size:8px;line-height:1;color:#f0f0f0;letter-spacing:-.2px"><span>200</span></div>
<div class="a" style="left:849.1px;top:486.8px;width:29.1px;height:36.2px;background:#555;"></div>
<div class="a" style="left:854.45px;top:491.8px;width:18.4px;height:18.4px;border-radius:50%;background:#f2f2f2;opacity:1"></div>
<div class="a" style="left:863.65px;top:515px;width:0;display:flex;justify-content:center;font-size:8px;line-height:1;color:#f0f0f0;letter-spacing:-.2px"><span>300</span></div>
<div class="a" style="left:879.2px;top:486.8px;width:29.1px;height:36.2px;background:#555;"></div>
<div class="a" style="left:884.55px;top:491.8px;width:18.4px;height:18.4px;border-radius:50%;background:#f2f2f2;opacity:1"></div>
<div class="a" style="left:893.75px;top:515px;width:0;display:flex;justify-content:center;font-size:8px;line-height:1;color:#f0f0f0;letter-spacing:-.2px"><span>400</span></div>
<div class="a" style="left:909.3px;top:486.8px;width:29.1px;height:36.2px;background:#555;"></div>
<div class="a" style="left:914.65px;top:491.8px;width:18.4px;height:18.4px;border-radius:50%;background:#f2f2f2;opacity:1"></div>
<div class="a" style="left:923.85px;top:515px;width:0;display:flex;justify-content:center;font-size:8px;line-height:1;color:#f0f0f0;letter-spacing:-.2px"><span>500</span></div>
<div class="a" style="left:939.4px;top:486.8px;width:29.1px;height:36.2px;background:#555;"></div>
<div class="a" style="left:944.75px;top:491.8px;width:18.4px;height:18.4px;border-radius:50%;background:#f2f2f2;opacity:1"></div>
<div class="a" style="left:953.95px;top:515px;width:0;display:flex;justify-content:center;font-size:8px;line-height:1;color:#f0f0f0;letter-spacing:-.2px"><span>700</span></div>
<div class="a" style="left:969.5px;top:486.8px;width:29.1px;height:36.2px;background:#555;"></div>
<div class="a" style="left:974.85px;top:491.8px;width:18.4px;height:18.4px;border-radius:50%;background:#f2f2f2;opacity:1"></div>
<div class="a" style="left:984.05px;top:515px;width:0;display:flex;justify-content:center;font-size:8px;line-height:1;color:#f0f0f0;letter-spacing:-.2px"><span>1000</span></div>
<div class="a" style="left:1018.5px;top:411px;width:5.5px;height:112px;background:#2a2a2a;"></div>
<div class="a" style="left:1019.2px;top:413px;width:4.8px;height:109.5px;background:#6c6c6c;border-radius:3px 0 0 3px"></div>
<div class="a" style="left:757.5px;top:531px;width:266.5px;height:2px;background:#1a1a1a;"></div>
</body></html>
